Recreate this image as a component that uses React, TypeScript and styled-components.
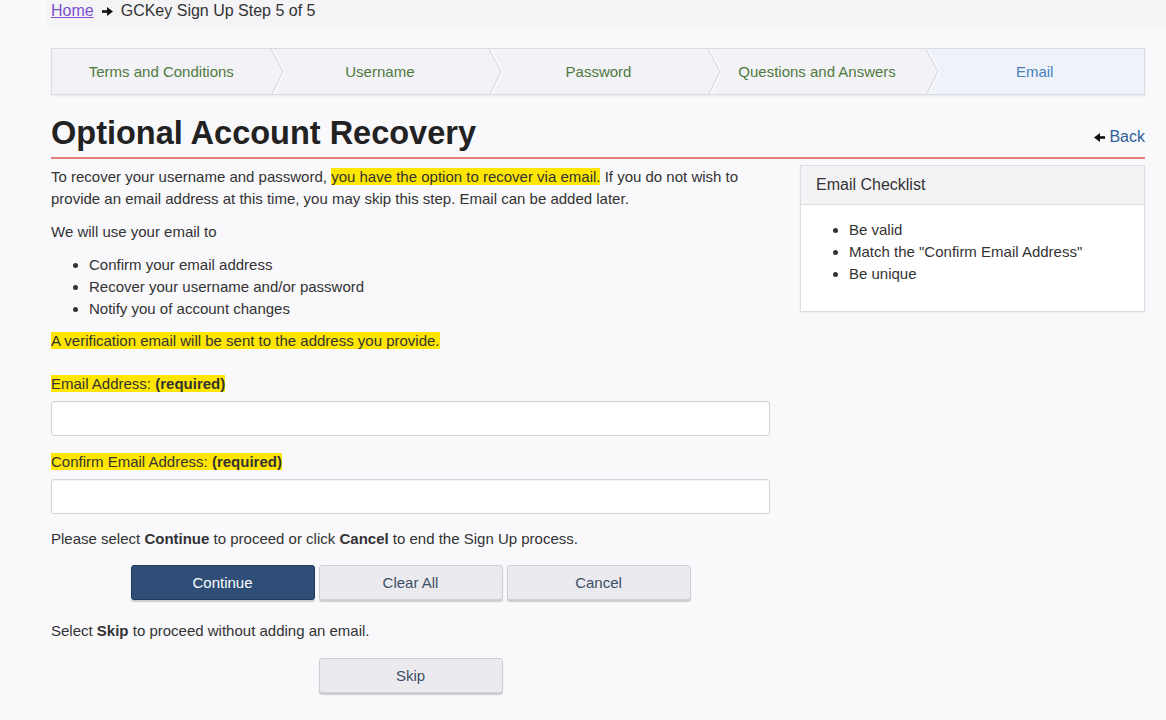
import React from "react";
import styled, { createGlobalStyle } from "styled-components";

const Global = createGlobalStyle`
  html, body { margin: 0; padding: 0; background: #f9f8fb; }
  body { font-family: "Liberation Sans", Arial, sans-serif; color: #333; font-size: 15px; }
  * { box-sizing: border-box; }
`;

const Page = styled.div`
  width: 1166px;
  min-height: 720px;
  display: flex;
  flex-direction: column;
`;

const Crumbs = styled.div`
  margin-left: 47px;
  height: 28px;
  background: #f4f3f6;
  display: flex;
  align-items: center;
  padding-left: 4px;
  gap: 8px;
  font-size: 16px;
  color: #333;
  padding-bottom: 6px;
`;

const HomeLink = styled.a`
  color: #7e4fd0;
  text-decoration: underline;
`;

const Arrow = styled.svg<{ $left?: boolean }>`
  width: 11px;
  height: 9px;
  flex: none;
  transform: ${(p) => (p.$left ? "scaleX(-1)" : "none")};
`;

const Main = styled.div`
  padding: 20px 21px 0 51px;
  display: flex;
  flex-direction: column;
`;

const Steps = styled.div`
  display: flex;
  height: 47px;
  border: 1px solid #dcdbe0;
  background: #f3f2f6;
  box-shadow: 0 1px 2px rgba(0, 0, 0, 0.08);
`;

const Step = styled.div<{ $active?: boolean }>`
  position: relative;
  flex: 1;
  display: flex;
  align-items: center;
  justify-content: center;
  padding-bottom: 1px;
  font-size: 15px;
  color: ${(p) => (p.$active ? "#4a7fb8" : "#4e7a3f")};
  background: ${(p) => (p.$active ? "#eef3fb" : "transparent")};
  clip-path: ${(p) =>
    p.$active ? "polygon(0 0, 100% 0, 100% 100%, 0 100%, 12px 50%)" : "none"};
  margin-left: ${(p) => (p.$active ? "-1px" : "0")};
`;

const Chevron = styled.svg`
  position: absolute;
  right: -13px;
  top: 0;
  width: 14px;
  height: 100%;
  z-index: 1;
`;

const TitleRow = styled.div`
  display: flex;
  align-items: flex-end;
  justify-content: space-between;
  margin-top: 18px;
  padding-bottom: 4px;
  border-bottom: 2px solid #e4807c;
`;

const Title = styled.h1`
  margin: 0;
  font-size: 32.5px;
  font-weight: bold;
  color: #222;
  line-height: 40px;
`;

const BackLink = styled.a`
  color: #2d5f9a;
  font-size: 16px;
  text-decoration: none;
  margin-bottom: 7px;
  display: flex;
  align-items: center;
  gap: 4px;
`;

const Columns = styled.div`
  display: grid;
  grid-template-columns: 719px 345px;
  column-gap: 30px;
  margin-top: 6px;
`;

const Left = styled.div`
  display: flex;
  flex-direction: column;
`;

const P = styled.p<{ $mt?: number }>`
  margin: ${(p) => p.$mt ?? 0}px 0 0;
  line-height: 22px;
  font-size: 15px;
  color: #333;
`;

const Hl = styled.mark`
  background: #ffe600;
  color: #333;
`;

const List = styled.ul<{ $mt?: number }>`
  margin: ${(p) => p.$mt ?? 0}px 0 0;
  padding-left: 38px;
  line-height: 22px;
  font-size: 15px;
`;

const Label = styled.label<{ $mt?: number }>`
  display: block;
  margin-top: ${(p) => p.$mt ?? 0}px;
  line-height: 22px;
  font-size: 15px;
`;

const Input = styled.input`
  display: block;
  width: 100%;
  height: 35px;
  margin-top: 6px;
  border: 1px solid #d4d4d8;
  border-radius: 3px;
  background: #fff;
  box-shadow: inset 0 1px 1px rgba(0, 0, 0, 0.05);
`;

const ButtonRow = styled.div<{ $mt?: number }>`
  display: flex;
  justify-content: center;
  gap: 4px;
  margin-top: ${(p) => p.$mt ?? 0}px;
`;

const Button = styled.button<{ $primary?: boolean }>`
  width: 184px;
  height: 35px;
  font-family: "Liberation Sans", Arial, sans-serif;
  font-size: 15px;
  border-radius: 3px;
  cursor: pointer;
  border: 1px solid ${(p) => (p.$primary ? "#1f3a5e" : "#cfcfd4")};
  background: ${(p) => (p.$primary ? "#2e4e78" : "#ebeaee")};
  color: ${(p) => (p.$primary ? "#fff" : "#3d4f66")};
  box-shadow: 0 2px 1px rgba(0, 0, 0, 0.18);
`;

const Panel = styled.section`
  align-self: start;
  border: 1px solid #dedde2;
  background: #fff;
  box-shadow: 0 1px 2px rgba(0, 0, 0, 0.06);
`;

const PanelHead = styled.div`
  height: 39px;
  background: #f3f2f5;
  border-bottom: 1px solid #dedde2;
  display: flex;
  align-items: center;
  padding-left: 15px;
  font-size: 16px;
  color: #333;
`;

const PanelBody = styled.div`
  padding: 14px 15px 26px;
`;

const PanelList = styled.ul`
  margin: 0;
  padding-left: 33px;
  line-height: 22px;
  font-size: 15px;
  color: #333;
`;

const steps = [
  "Terms and Conditions",
  "Username",
  "Password",
  "Questions and Answers",
  "Email",
];

const ArrowIcon = ({ left }: { left?: boolean }) => (
  <Arrow viewBox="0 0 11 9" $left={left}>
    <rect x="0" y="3.2" width="6" height="2.6" fill="#111" />
    <polygon points="5,0 11,4.5 5,9" fill="#111" />
  </Arrow>
);

export default function App() {
  return (
    <Page>
      <Global />
      <Crumbs>
        <HomeLink href="#">Home</HomeLink>
        <ArrowIcon />
        <span>GCKey Sign Up Step 5 of 5</span>
      </Crumbs>
      <Main>
        <Steps>
          {steps.map((s, i) => (
            <Step key={s} $active={i === steps.length - 1}>
              {s}
              {i < steps.length - 1 && (
                <Chevron viewBox="0 0 14 47" preserveAspectRatio="none">
                  <polyline
                    points="1,0 13,23.5 2,47"
                    fill="none"
                    stroke="#ffffff"
                    strokeWidth="2"
                    transform="translate(1,0)"
                  />
                  <polyline
                    points="1,0 13,23.5 2,47"
                    fill="none"
                    stroke="#d9d8de"
                    strokeWidth="1.2"
                  />
                </Chevron>
              )}
            </Step>
          ))}
        </Steps>
        <TitleRow>
          <Title>Optional Account Recovery</Title>
          <BackLink href="#">
            <ArrowIcon left />
            Back
          </BackLink>
        </TitleRow>
        <Columns>
          <Left>
            <P $mt={1}>
              To recover your username and password,{" "}
              <Hl>you have the option to recover via email.</Hl> If you do not
              wish to provide an email address at this time, you may skip this
              step. Email can be added later.
            </P>
            <P $mt={11}>We will use your email to</P>
            <List $mt={11}>
              <li>Confirm your email address</li>
              <li>Recover your username and/or password</li>
              <li>Notify you of account changes</li>
            </List>
            <P $mt={10}>
              <Hl>A verification email will be sent to the address you provide.</Hl>
            </P>
            <Label $mt={21}>
              <Hl>
                Email Address: <b>(required)</b>
              </Hl>
            </Label>
            <Input type="email" />
            <Label $mt={15}>
              <Hl>
                Confirm Email Address: <b>(required)</b>
              </Hl>
            </Label>
            <Input type="email" />
            <P $mt={14}>
              Please select <b>Continue</b> to proceed or click <b>Cancel</b> to
              end the Sign Up process.
            </P>
            <ButtonRow $mt={15}>
              <Button $primary>Continue</Button>
              <Button>Clear All</Button>
              <Button>Cancel</Button>
            </ButtonRow>
            <P $mt={20}>
              Select <b>Skip</b> to proceed without adding an email.
            </P>
            <ButtonRow $mt={16}>
              <Button>Skip</Button>
            </ButtonRow>
          </Left>
          <Panel>
            <PanelHead>Email Checklist</PanelHead>
            <PanelBody>
              <PanelList>
                <li>Be valid</li>
                <li>Match the "Confirm Email Address"</li>
                <li>Be unique</li>
              </PanelList>
            </PanelBody>
          </Panel>
        </Columns>
      </Main>
    </Page>
  );
}
